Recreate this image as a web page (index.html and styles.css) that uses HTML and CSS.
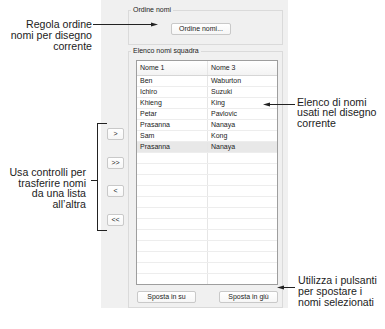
FILE: index.html
```html
<!DOCTYPE html>
<html lang="it">
<head>
    <meta charset="UTF-8">
    <meta name="viewport" content="width=device-width, initial-scale=1.0">
    <title>Elenco nomi squadra</title>
    <link rel="stylesheet" href="styles.css">
</head>
<body>
    <div class="page">
        <div class="panel">
            <!-- pulsanti di trasferimento -->
            <div class="side">
                <button class="btn small">&gt;</button>
                <button class="btn small">&gt;&gt;</button>
                <button class="btn small">&lt;</button>
                <button class="btn small">&lt;&lt;</button>
            </div>

            <div class="main">
                <fieldset class="group">
                    <legend>Ordine nomi</legend>
                    <div class="group-order">
                        <button class="btn order">Ordine nomi...</button>
                    </div>
                </fieldset>

                <fieldset class="group list-group">
                    <legend>Elenco nomi squadra</legend>
                    <div class="group-list">
                        <div class="grid">
                            <div class="row head">
                                <div class="cell">Nome 1</div>
                                <div class="cell">Nome 3</div>
                            </div>
                            <div class="row"><div class="cell">Ben</div><div class="cell">Waburton</div></div>
                            <div class="row"><div class="cell">Ichiro</div><div class="cell">Suzuki</div></div>
                            <div class="row"><div class="cell">Khieng</div><div class="cell">King</div></div>
                            <div class="row"><div class="cell">Petar</div><div class="cell">Pavlovic</div></div>
                            <div class="row"><div class="cell">Prasanna</div><div class="cell">Nanaya</div></div>
                            <div class="row"><div class="cell">Sam</div><div class="cell">Kong</div></div>
                            <div class="row selected"><div class="cell">Prasanna</div><div class="cell">Nanaya</div></div>
                            <div class="row"><div class="cell"></div><div class="cell"></div></div>
                            <div class="row"><div class="cell"></div><div class="cell"></div></div>
                            <div class="row"><div class="cell"></div><div class="cell"></div></div>
                            <div class="row"><div class="cell"></div><div class="cell"></div></div>
                            <div class="row"><div class="cell"></div><div class="cell"></div></div>
                            <div class="row"><div class="cell"></div><div class="cell"></div></div>
                            <div class="row"><div class="cell"></div><div class="cell"></div></div>
                            <div class="row"><div class="cell"></div><div class="cell"></div></div>
                            <div class="row"><div class="cell"></div><div class="cell"></div></div>
                            <div class="row"><div class="cell"></div><div class="cell"></div></div>
                            <div class="row"><div class="cell"></div><div class="cell"></div></div>
                            <div class="row last"><div class="cell"></div><div class="cell"></div></div>
                        </div>
                        <div class="move">
                            <button class="btn wide">Sposta in su</button>
                            <button class="btn wide">Sposta in giù</button>
                        </div>
                    </div>
                </fieldset>
            </div>
        </div>

        <!-- didascalie -->
        <div class="note note-order">Regola ordine<br>nomi per disegno<br>corrente</div>
        <div class="note note-list">Elenco di nomi<br>usati nel disegno<br>corrente</div>
        <div class="note note-side">Usa controlli per<br>trasferire nomi<br>da una lista<br>all’altra</div>
        <div class="note note-move">Utilizza i pulsanti<br>per spostare i<br>nomi selezionati</div>

        <svg class="lines" width="385" height="329" viewBox="0 0 385 329">
            <g stroke="#222" stroke-width="1" fill="none" shape-rendering="crispEdges">
                <path d="M93 24.5 H153"/>
                <path d="M269 104.5 H295"/>
                <path d="M283 287.5 H295"/>
                <path d="M107 123.5 H97.5 V230.5 H107"/>
                <path d="M91 180.5 H97.5"/>
            </g>
            <g fill="#222">
                <polygon points="158,24.5 151,22.6 151,26.4"/>
                <polygon points="263,104.5 270,102.6 270,106.4"/>
                <polygon points="277,287.5 284,285.6 284,289.4"/>
            </g>
        </svg>
    </div>
</body>
</html>
```

FILE: styles.css
```css
*{
    margin: 0;
    padding: 0;
    box-sizing: border-box;
}
body{
    background-color: #fff;
}
.page{
    position: relative;
    width: 385px;
    height: 329px;
    overflow: hidden;
    font-family: "Liberation Sans", Arial, sans-serif;
}
.panel{
    margin-left: 101px;
    width: 187px;
    height: 308px;
    background-color: #f0f0f0;
    display: flex;
}
.side{
    width: 27px;
    padding: 128px 0 0 6px;
    display: flex;
    flex-direction: column;
    gap: 16.5px;
}
.main{
    width: 155px;
    padding-top: 6px;
}
.btn{
    font-family: "Liberation Sans", Arial, sans-serif;
    font-size: 7px;
    color: #222;
    height: 12px;
    line-height: 10px;
    background: linear-gradient(#ffffff, #f6f6f6);
    border: 1px solid #c9c9c9;
    border-radius: 2px;
    text-align: center;
}
.small{
    width: 17px;
}
.order{
    width: 60px;
}
.wide{
    width: 59px;
}
.group{
    border: 1px solid #dadada;
    padding: 0;
    margin: 0;
    min-width: 0;
}
.group legend{
    font-size: 7px;
    line-height: 8px;
    color: #222;
    margin-left: 2px;
    padding: 0 2px;
}
.group-order{
    padding: 3px 0 9px 42px;
}
.list-group{
    margin-top: 2px;
}
.group-list{
    padding: 5px 4px 4px 7px;
}
.grid{
    border: 1px solid #9e9e9e;
    background-color: #fff;
}
.row{
    display: flex;
    height: 11px;
    border-bottom: 1px solid #ededed;
    font-size: 7px;
    line-height: 10px;
    color: #222;
}
.row.last{
    border-bottom: none;
    height: 10px;
}
.row.head{
    height: 15px;
    line-height: 14px;
    background: linear-gradient(#ffffff, #f3f3f3);
    border-bottom: 1px solid #d6d6d6;
}
.row.selected{
    background-color: #e8e8e8;
}
.cell{
    width: 71px;
    padding-left: 3px;
    border-right: 1px solid #e6e6e6;
    white-space: nowrap;
}
.cell + .cell{
    flex: 1;
    border-right: none;
}
.move{
    margin-top: 6px;
    display: flex;
    justify-content: space-between;
    padding: 0 0 0 1px;
}
/* didascalie */
.note{
    position: absolute;
    font-size: 10.6px;
    color: #1c1c1c;
    white-space: nowrap;
}
.note-order{
    right: 293px;
    top: 18.5px;
    line-height: 11.4px;
    text-align: right;
}
.note-side{
    right: 299px;
    top: 167px;
    line-height: 10.7px;
    text-align: right;
}
.note-list{
    left: 297px;
    top: 96.5px;
    line-height: 10.6px;
}
.note-move{
    left: 298px;
    top: 274.5px;
    line-height: 11px;
}
.lines{
    position: absolute;
    left: 0;
    top: 0;
}
```
